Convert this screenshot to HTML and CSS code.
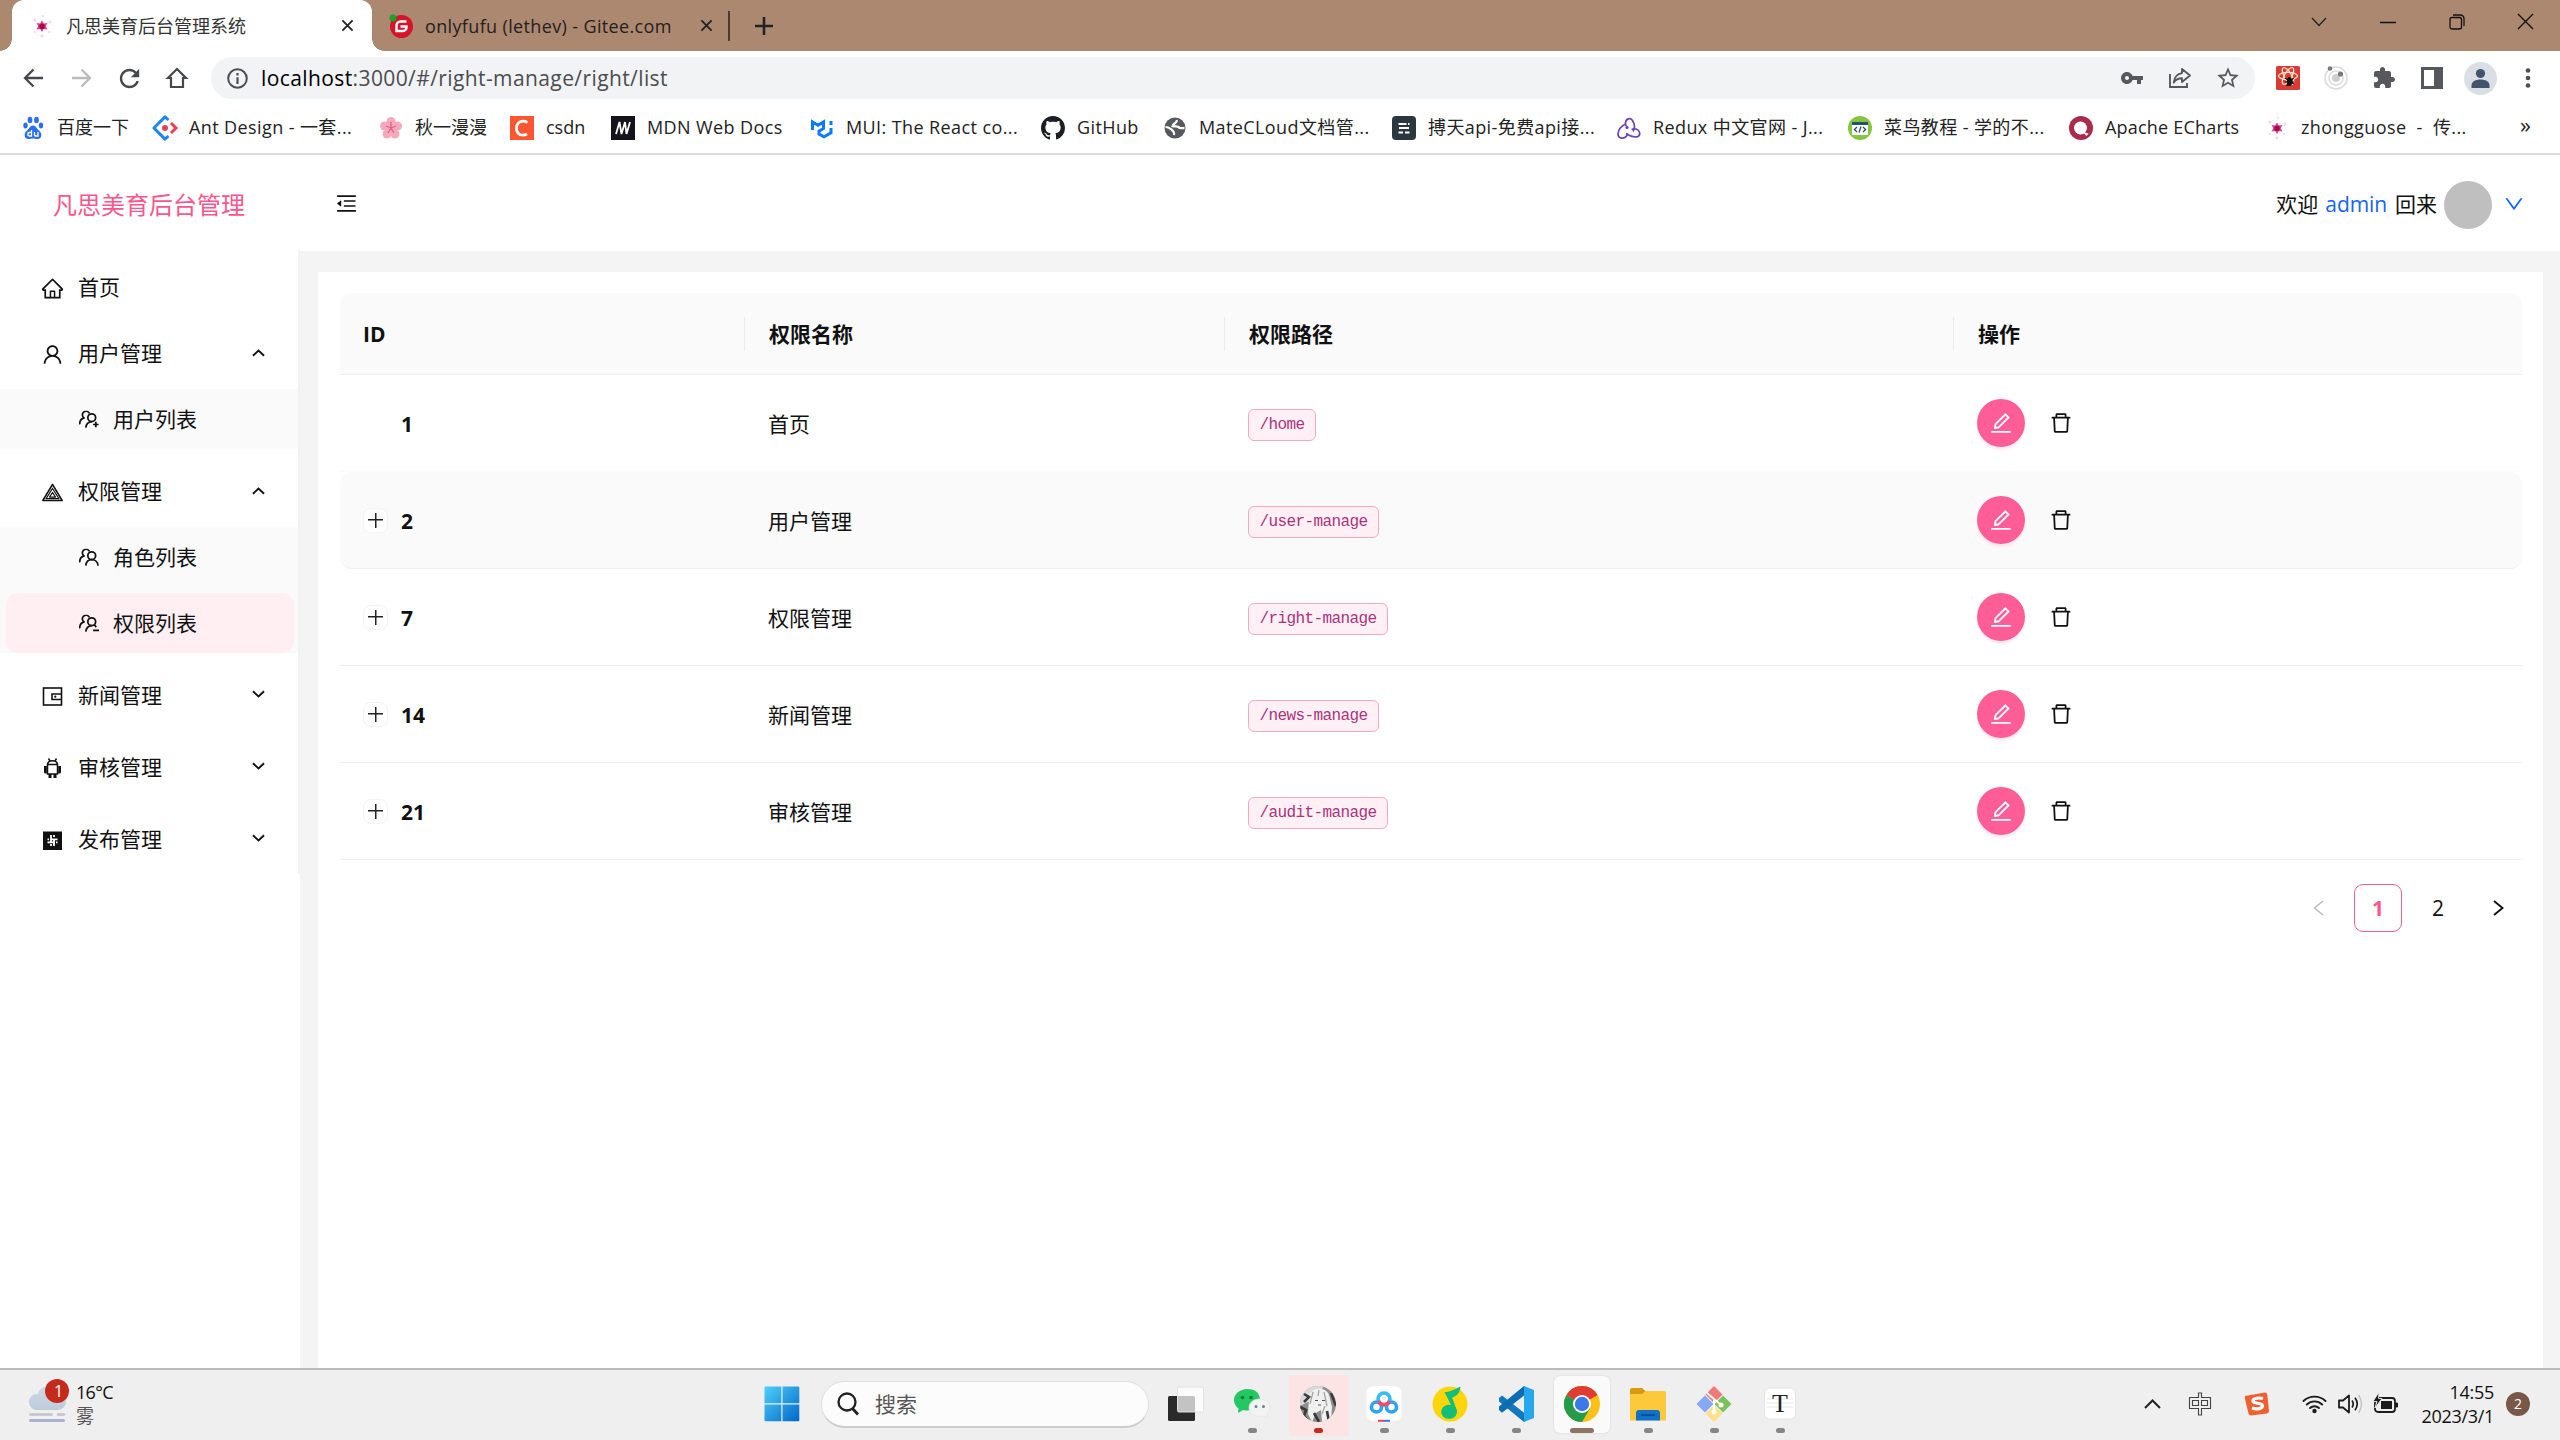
FILE: index.html
```html
<!DOCTYPE html>
<html lang="zh-CN">
<head>
<meta charset="utf-8">
<title>凡思美育后台管理系统</title>
<link rel="stylesheet" href="styles.css">
</head>
<body>
<svg class="defs" width="0" height="0">
  <defs>
    <symbol id="i-edit" viewBox="64 64 896 896"><path d="M257.7 752c2 0 4-.2 6-.5L431.9 722c2-.4 3.9-1.3 5.3-2.8l423.9-423.9a9.96 9.96 0 000-14.1L694.9 114.9c-1.9-1.9-4.4-2.9-7.1-2.9s-5.2 1-7.1 2.9L256.8 538.8c-1.5 1.5-2.4 3.3-2.8 5.3l-29.5 168.2a33.5 33.5 0 009.4 29.8c6.6 6.4 14.9 9.9 23.8 9.9zm67.4-174.4L687.8 215l73.3 73.3-362.7 362.6-88.9 15.7 15.6-89zM880 836H144c-17.7 0-32 14.3-32 32v36c0 4.4 3.6 8 8 8h784c4.4 0 8-3.6 8-8v-36c0-17.7-14.3-32-32-32z"/></symbol>
    <symbol id="i-delete" viewBox="64 64 896 896"><path d="M360 184h-8c4.4 0 8-3.6 8-8v8h304v-8c0 4.4 3.6 8 8 8h-8v72h72v-80c0-35.3-28.7-64-64-64H352c-35.3 0-64 28.7-64 64v80h72v-72zm504 72H160c-17.7 0-32 14.3-32 32v32c0 4.4 3.6 8 8 8h60.4l24.7 523c1.6 34.1 29.8 61 63.9 61h454c34.2 0 62.3-26.8 63.9-61l24.7-523H888c4.4 0 8-3.6 8-8v-32c0-17.7-14.3-32-32-32zM731.3 840H292.7l-24.2-512h487l-24.2 512z"/></symbol>
    <symbol id="i-chev" viewBox="0 0 14 8"><path d="M1 1l6 5.6L13 1" fill="none" stroke="currentColor" stroke-width="2"/></symbol>
    <symbol id="i-close" viewBox="0 0 14 14"><path d="M1.5 1.5l11 11M12.500 1.500l-11 11" fill="none" stroke="currentColor" stroke-width="2"/></symbol>
    <symbol id="i-spark" viewBox="0 0 24 24"><g fill="#f8d3e2"><circle cx="5" cy="6" r="1.500"/><circle cx="13" cy="2" r="1"/><circle cx="20" cy="8" r="1.500"/><circle cx="19" cy="18" r="1"/><circle cx="12" cy="22" r="1.500"/><circle cx="5" cy="18" r="1"/></g><path d="M12 6.500l1.800 3 3.700-.5-1.800 3.200 1.800 3.300-3.700-.5L12 18l-1.800-3-3.700.5 1.800-3.300L6.500 9l3.700.5z" fill="#e0408a"/><circle cx="12" cy="12.300" r="2.800" fill="#b00050"/></symbol>
    <symbol id="i-people" viewBox="0 0 22 20"><g fill="none" stroke="currentColor" stroke-width="1.900" stroke-linecap="round"><circle cx="14" cy="8" r="4.300"/><path d="M11 2.600A4 4 0 1 0 5.600 8.300M.8 14.500c.2-3.400 2-5.500 4.800-6.200"/></g></symbol>
  </defs>
</svg>

<header class="browser">
  <div class="tabstrip">
    <div class="tab tab-active">
      <svg class="fav"><use href="#i-spark"/></svg>
      <span class="tab-title">凡思美育后台管理系统</span>
      <svg class="tab-x"><use href="#i-close"/></svg>
    </div>
    <div class="tab tab-idle">
      <svg class="fav" viewBox="0 0 24 24"><circle cx="12.500" cy="12.500" r="11.500" fill="#d4142a"/><circle cx="4" cy="4" r="3.500" fill="#1ea025"/><path d="M17.500 7.500h-6a4 4 0 0 0-4 4v5.500h6.500a3.500 3.500 0 0 0 3.500-3.500v-1h-6" fill="none" stroke="#fff" stroke-width="2.400"/></svg>
      <span class="tab-title idle-title">onlyfufu (lethev) - Gitee.com</span>
      <svg class="tab-x"><use href="#i-close"/></svg>
    </div>
    <i class="tab-sep"></i>
    <svg class="tab-new" viewBox="0 0 18 18"><path d="M9 0v18M0 9h18" stroke="#222" stroke-width="2.600"/></svg>
    <div class="wincontrols">
      <svg width="16" height="10" viewBox="0 0 16 10"><path d="M1 1l7 7.500L15 1" fill="none" stroke="#222" stroke-width="1.300"/></svg>
      <svg width="16" height="10" viewBox="0 0 16 10"><path d="M0 5.500h16" stroke="#111" stroke-width="1.500"/></svg>
      <svg width="16" height="16" viewBox="0 0 16 16"><g fill="none" stroke="#111" stroke-width="1.300"><rect x="1" y="3.500" width="11.500" height="11.500" rx="2"/><path d="M4 1h7.500A3.500 3.500 0 0 1 15 4.500V12"/></g></svg>
      <svg width="17" height="17" viewBox="0 0 17 17"><path d="M1 1l15 15M16 1L1 16" stroke="#111" stroke-width="1.400"/></svg>
    </div>
  </div>

  <div class="toolbar">
    <span class="slot"><svg width="21" height="20" viewBox="0 0 21 20"><path d="M20 10H2M10.500 1.500L2 10l8.500 8.500" fill="none" stroke="#45494d" stroke-width="2.300"/></svg></span>
    <span class="slot"><svg width="21" height="20" viewBox="0 0 21 20"><path d="M1 10h18M10.500 1.500L19 10l-8.500 8.500" fill="none" stroke="#b9bbbd" stroke-width="2.300"/></svg></span>
    <span class="slot"><svg width="29" height="29" viewBox="0 0 24 24"><path fill="#45494d" d="M17.650 6.350C16.200 4.900 14.210 4 12 4c-4.420 0-7.990 3.580-7.990 8s3.570 8 7.990 8c3.730 0 6.840-2.550 7.730-6h-2.080c-.82 2.330-3.040 4-5.650 4-3.310 0-6-2.690-6-6s2.690-6 6-6c1.660 0 3.140.69 4.220 1.780L13 11h7V4l-2.350 2.350z"/></svg></span>
    <span class="slot"><svg width="22" height="22" viewBox="0 0 22 22"><path d="M11 2L2 11h3v9h12v-9h3z" fill="none" stroke="#45494d" stroke-width="2.200"/></svg></span>
    <div class="omnibox">
      <svg class="info" width="21" height="21" viewBox="0 0 21 21"><circle cx="10.500" cy="10.500" r="9.300" fill="none" stroke="#4b4f54" stroke-width="2"/><path d="M10.500 9.300V16M10.500 5v2.400" stroke="#4b4f54" stroke-width="2.200"/></svg>
      <span class="url"><b>localhost</b>:3000/#/right-manage/right/list</span>
      <span class="slot"><svg width="24" height="24" viewBox="0 0 24 24"><path fill="#55595e" d="M12.650 10C11.830 7.670 9.610 6 7 6c-3.310 0-6 2.690-6 6s2.690 6 6 6c2.610 0 4.830-1.670 5.650-4H17v4h4v-4h2v-4H12.650zM7 14c-1.100 0-2-.9-2-2s.9-2 2-2 2 .9 2 2-.9 2-2 2z"/></svg></span>
      <span class="slot"><svg width="24" height="24" viewBox="0 0 24 24"><g fill="none" stroke="#55595e" stroke-width="1.900"><path d="M2 8v13h17v-4"/><path d="M14 3l8 6.500-8 6.500v-3.800c-4 0-6.500 1.300-8.300 4.300.6-5 3.300-8.700 8.300-9.400z" stroke-linejoin="round"/></g></svg></span>
      <span class="slot"><svg width="26" height="26" viewBox="0 0 24 24"><path fill="#55595e" d="M22 9.240l-7.190-.62L12 2 9.190 8.630 2 9.240l5.460 4.730L5.820 21 12 17.270 18.180 21l-1.630-7.030L22 9.240zM12 15.400l-3.760 2.270 1-4.280-3.320-2.880 4.380-.38L12 6.100l1.710 4.040 4.380.38-3.320 2.880 1 4.280L12 15.400z"/></svg></span>
    </div>
    <span class="slot"><svg width="24" height="24" viewBox="0 0 24 24"><rect width="24" height="24" rx="1.500" fill="#da3a34"/><g fill="none" stroke="#ffe3c8" stroke-width="1.300"><ellipse cx="12" cy="10" rx="9.500" ry="3.600"/><ellipse cx="12" cy="10" rx="9.500" ry="3.600" transform="rotate(60 12 10)"/><ellipse cx="12" cy="10" rx="9.500" ry="3.600" transform="rotate(120 12 10)"/></g><ellipse cx="13.500" cy="15.500" rx="2.700" ry="4.500" fill="#111"/><path d="M9 12l9 6M17.500 12l-7 8M9 16h9" stroke="#111" stroke-width="1.200"/></svg></span>
    <span class="slot"><svg width="24" height="24" viewBox="0 0 24 24"><g fill="none" stroke="#dcdcdc" stroke-width="1.600"><circle cx="12" cy="12" r="11"/><circle cx="12" cy="12" r="7"/></g><circle cx="12" cy="12" r="4" fill="#cfcfcf"/><circle cx="6" cy="2.500" r="2.300" fill="#77797b"/><circle cx="16.500" cy="8" r="2.600" fill="#77797b"/></svg></span>
    <span class="slot"><svg width="24" height="24" viewBox="0 0 24 24"><path fill="#55595e" d="M20.500 11H19V7c0-1.100-.9-2-2-2h-4V3.500C13 2.120 11.880 1 10.500 1S8 2.120 8 3.500V5H4c-1.100 0-1.990.9-1.990 2v3.800H3.500c1.490 0 2.700 1.210 2.700 2.700s-1.210 2.700-2.700 2.700H2V20c0 1.100.9 2 2 2h3.800v-1.500c0-1.490 1.210-2.700 2.700-2.700 1.490 0 2.700 1.210 2.700 2.700V22H17c1.100 0 2-.9 2-2v-4h1.500c1.380 0 2.500-1.120 2.500-2.500S21.880 11 20.500 11z"/></svg></span>
    <span class="slot"><svg width="22" height="22" viewBox="0 0 22 22"><path fill="#55595e" fill-rule="evenodd" d="M0 0h22v22H0zM3 3v16h10V3z"/></svg></span>
    <span class="slot"><svg width="33" height="33" viewBox="0 0 33 33"><circle cx="16.500" cy="16.500" r="16.500" fill="#dadee5"/><circle cx="16.500" cy="11.500" r="4.600" fill="#43546c"/><path d="M7.500 26v-2.500c0-4 4-6 9-6s9 2 9 6V26z" fill="#43546c"/></svg></span>
    <span class="slot"><svg width="6" height="20" viewBox="0 0 6 20"><g fill="#4b4f54"><circle cx="3" cy="2.500" r="2.300"/><circle cx="3" cy="10" r="2.300"/><circle cx="3" cy="17.500" r="2.300"/></g></svg></span>
  </div>

  <nav class="bookmarks">
    <a class="bm"><svg viewBox="0 0 24 24"><g fill="#2a6ff0"><ellipse cx="9" cy="4" rx="2.400" ry="3.300"/><ellipse cx="15.500" cy="4" rx="2.400" ry="3.300"/><ellipse cx="4.500" cy="9.500" rx="2.200" ry="3"/><ellipse cx="20" cy="9.500" rx="2.200" ry="3"/><path d="M12 9.500c3 0 4 3.500 6.500 5.500s3 8-2 8c-2 0-3-.6-4.500-.6s-2.500.6-4.500.6c-5 0-4.500-6-2-8s3.500-5.500 6.500-5.500z"/></g><path d="M10.500 14v6h-2a1.600 1.600 0 0 1 0-3.500h2M13.500 16v2.800q0 1.200 1.200 1.200H17v-4" fill="none" stroke="#fff" stroke-width="1.300"/></svg><span>百度一下</span></a>
    <a class="bm"><svg viewBox="0 0 24 24"><path d="M15.500 4L12 .9.9 12 12 23.100l3.500-3.100" fill="none" stroke="#1d86f5" stroke-width="3" stroke-linejoin="round"/><path d="M18 7l5 5-5 5" fill="none" stroke="#ee3f52" stroke-width="3"/><circle cx="12" cy="12" r="3" fill="#ee3f52"/></svg><span class="latin">Ant Design - 一套...</span></a>
    <a class="bm"><svg viewBox="0 0 24 24"><g fill="#f6a9bd"><circle cx="12" cy="5.500" r="4.500"/><circle cx="18.500" cy="10" r="4.500"/><circle cx="16" cy="18" r="4.500"/><circle cx="8" cy="18" r="4.500"/><circle cx="5.500" cy="10" r="4.500"/><circle cx="12" cy="12" r="4"/></g><path d="M12 12V6M12 12l5-2M12 12l3 5M12 12l-3 5M12 12l-5-2" stroke="#de6480" stroke-width="1.300"/></svg><span>秋一漫漫</span></a>
    <a class="bm"><svg viewBox="0 0 24 24"><rect width="24" height="24" fill="#fc5531"/><path d="M17.500 6.500C12 3.500 6.500 6 6.500 12.300S12 20.500 17 18" fill="none" stroke="#fff" stroke-width="2.800"/></svg><span>csdn</span></a>
    <a class="bm"><svg viewBox="0 0 24 24"><rect width="24" height="24" fill="#15141a"/><path d="M5 18l3.500-12 2 12L14 6l1.500 12L19 6" fill="none" stroke="#fff" stroke-width="1.800"/></svg><span class="latin">MDN Web Docs</span></a>
    <a class="bm"><svg viewBox="0 0 24 24"><path d="M2.500 14V6l5.500 3.300L13.500 6v6.500L9 15.200V18l5 2.800 7-4V12M21 5v4" fill="none" stroke="#0a7aff" stroke-width="3"/></svg><span class="latin">MUI: The React co...</span></a>
    <a class="bm"><svg viewBox="0 0 16 16"><path fill="#1b1f23" d="M8 0C3.580 0 0 3.580 0 8c0 3.540 2.290 6.530 5.470 7.590.4.070.55-.17.55-.38 0-.19-.01-.82-.01-1.490-2.010.37-2.530-.49-2.690-.94-.09-.23-.48-.94-.82-1.130-.28-.15-.68-.52-.01-.53.63-.01 1.080.58 1.230.82.72 1.210 1.870.87 2.330.66.070-.52.28-.87.51-1.070-1.780-.2-3.640-.89-3.640-3.950 0-.87.31-1.590.82-2.150-.08-.2-.36-1.020.08-2.120 0 0 .67-.21 2.200.82.64-.18 1.320-.27 2-.27s1.360.09 2 .27c1.530-1.040 2.200-.82 2.200-.82.44 1.100.16 1.920.08 2.120.51.56.82 1.270.82 2.150 0 3.070-1.870 3.750-3.650 3.950.29.25.54.73.54 1.480 0 1.070-.01 1.930-.01 2.200 0 .21.15.46.55.38A8.010 8.010 0 0016 8c0-4.420-3.580-8-8-8z"/></svg><span class="latin">GitHub</span></a>
    <a class="bm"><svg viewBox="0 0 24 24"><circle cx="12" cy="12" r="10.500" fill="#56595d"/><path d="M13.500 4c1.500 3-3.500 3-4 6.200 3 .5 6-.5 7 1.800 2 .5 4 0 5 0M2.500 11c3 0 4 1 6 2.500s3 2.500 2.500 5.500" fill="none" stroke="#fff" stroke-width="2.200"/></svg><span class="latin">MateCLoud文档管...</span></a>
    <a class="bm"><svg viewBox="0 0 24 24"><rect width="24" height="24" rx="4" fill="#2c383f"/><path d="M6.500 8h8M16 8h1.500M7 12h10M6.500 16.500h4.500M13 16.500h4.500" stroke="#fff" stroke-width="2"/></svg><span class="latin">搏天api-免费api接...</span></a>
    <a class="bm"><svg viewBox="0 0 24 24"><g fill="none" stroke="#6c42b4" stroke-width="1.700"><path d="M16 15.500c2-3 2-7-.5-11-2-3-6.500-2-7 2-.3 2 .5 3.500 1.500 4.500"/><path d="M8.500 8c-4 2-7 6-7.500 9.500-.3 4 4 6 7.500 3.500 1.500-1 2-2.500 2-3.500"/><path d="M9 17.500c4 2.500 8 4.500 12 3 3-2 1.800-6.500-2-7.500-2-.5-3.500 0-4.500.5"/></g><circle cx="10" cy="11.500" r="1.600" fill="#6c42b4"/></svg><span class="latin">Redux 中文官网 - J...</span></a>
    <a class="bm"><svg viewBox="0 0 24 24"><circle cx="12" cy="12" r="12" fill="#87c540"/><rect x="4" y="6" width="16" height="13" rx="1" fill="#fff"/><path d="M4 6h16v3H4z" fill="#25506b"/><path d="M9 11l-2.500 2.500L9 16M15 11l2.500 2.500L15 16M13 10.500l-2 6" fill="none" stroke="#25506b" stroke-width="1.300"/></svg><span class="latin">菜鸟教程 - 学的不...</span></a>
    <a class="bm"><svg viewBox="0 0 24 24"><circle cx="12" cy="12" r="12" fill="#a92c4e"/><circle cx="11.500" cy="12" r="6.500" fill="#fff"/><path d="M13 15.500l6.500 2-2 2.500z" fill="#fff"/></svg><span class="echarts">Apache ECharts</span></a>
    <a class="bm"><svg><use href="#i-spark"/></svg><span class="latin">zhongguose&nbsp; -&nbsp; 传...</span></a>
    <span class="more">»</span>
  </nav>
</header>

<div class="app">
  <aside class="sider">
    <h1 class="logo">凡思美育后台管理</h1>
    <div class="menu">
      <div class="mi home"><svg class="mic" viewBox="64 64 896 896"><path d="M946.500 505L560.100 118.800l-25.900-25.900a31.500 31.500 0 00-44.400 0L77.500 505a63.900 63.900 0 00-18.800 46c.4 35.200 29.700 63.300 64.900 63.300h42.500V940h691.800V614.300h43.400c17.100 0 33.200-6.700 45.300-18.800a63.600 63.600 0 0018.700-45.300c0-17-6.700-33.100-18.800-45.200zM568 868H456V664h112v204zm217.900-325.700V868H632V640c0-22.100-17.900-40-40-40H432c-22.100 0-40 17.900-40 40v228H238.100V542.300h-96l370-369.700 23.100 23.100L882 542.300h-96.100z"/></svg><span>首页</span></div>
      <div class="mi"><svg class="mic" viewBox="64 64 896 896"><path d="M858.500 763.600a374 374 0 00-80.600-119.500 375.630 375.630 0 00-119.500-80.600c-.4-.2-.8-.3-1.200-.5C719.500 518 760 444.700 760 362c0-137-111-248-248-248S264 225 264 362c0 82.700 40.500 156 102.800 201.100-.4.2-.8.3-1.200.5-44.800 18.900-85 46-119.500 80.600a375.630 375.630 0 00-80.600 119.500A371.700 371.700 0 00136 901.800a8 8 0 008 8.200h60c4.400 0 7.900-3.500 8-7.800 2-77.200 33-149.500 87.800-204.300 56.700-56.700 132-87.900 212.200-87.900s155.500 31.200 212.200 87.900C779 752.700 810 825 812 902.200c.1 4.400 3.600 7.800 8 7.800h60a8 8 0 008-8.200c-1-47.800-10.900-94.300-29.500-138.200zM512 534c-45.900 0-89.100-17.900-121.600-50.400S340 407.900 340 362c0-45.900 17.900-89.100 50.400-121.600S466.100 190 512 190s89.100 17.900 121.600 50.400S684 316.100 684 362c0 45.900-17.900 89.100-50.400 121.600S557.900 534 512 534z"/></svg><span>用户管理</span><svg class="arrow up"><use href="#i-chev"/></svg></div>
      <div class="sub">
        <div class="si"><svg class="sic" viewBox="0 0 22 20"><use href="#i-people"/><path d="M7.500 19c.3-3.800 2.500-6.300 6.500-6.700M18.500 12.500v6M15.500 15.500h6" fill="none" stroke="currentColor" stroke-width="1.900"/></svg><span>用户列表</span></div>
      </div>
      <div class="mi"><svg class="mic" viewBox="0 0 21 21"><g fill="none" stroke="currentColor" stroke-linejoin="round"><path d="M10.500 2.500L20.200 18.500H.8z" stroke-width="1.500"/><path d="M10.500 6.500l6.500 10.200H4z" stroke-width="1.200"/><path d="M10.500 10.500l3 4.600h-6z" stroke-width="1.200"/></g></svg><span>权限管理</span><svg class="arrow up"><use href="#i-chev"/></svg></div>
      <div class="sub">
        <div class="si"><svg class="sic" viewBox="0 0 22 20"><use href="#i-people"/><path d="M7.500 19c.3-4 2.700-6.700 6.500-6.700s6.700 2.700 7 6.700" fill="none" stroke="currentColor" stroke-width="1.900"/></svg><span>角色列表</span></div>
        <div class="si si-active"><svg class="sic" viewBox="0 0 22 20"><use href="#i-people"/><path d="M7.500 19c.3-3.800 2.500-6.300 6.500-6.700M15.500 17.500h6.500M16.500 11l2.500 3" fill="none" stroke="currentColor" stroke-width="1.900"/></svg><span>权限列表</span></div>
      </div>
      <div class="mi"><svg class="mic" viewBox="0 0 21 21"><g fill="none" stroke="currentColor" stroke-width="1.600"><rect x="1.500" y="2" width="18" height="17"/><path d="M19.500 8H10v5.500h9.500"/></g><circle cx="13.300" cy="10.700" r="1.100"/></svg><span>新闻管理</span><svg class="arrow"><use href="#i-chev"/></svg></div>
      <div class="mi"><svg class="mic" viewBox="0 0 21 21"><g fill="none" stroke="currentColor" stroke-width="1.500"><path d="M5.500 6.500v9.500h10V6.500zM5.500 6.500c.3-2.500 2.200-3.700 5-3.700s4.700 1.200 5 3.700M6.500.5L8 3M14.500.5L13 3"/></g><path d="M2 8h2.800v7.500H3.500A1.500 1.500 0 0 1 2 14zM16.200 8H19v6a1.500 1.500 0 0 1-1.500 1.500h-1.300zM6.500 16h3v4h-3zM11.500 16h3v4h-3z"/></svg><span>审核管理</span><svg class="arrow"><use href="#i-chev"/></svg></div>
      <div class="mi"><svg class="mic" viewBox="0 0 21 21"><rect x="1" y="1.500" width="19" height="18.500"/><path d="M9 5v7M12 9.500v6.500M5.500 12.300H12M9 9.300h6.500M12 5v2M9 14v2M5.500 9.300h1.500M14 12.300h1.500" stroke="#fff" stroke-width="1.800"/></svg><span>发布管理</span><svg class="arrow"><use href="#i-chev"/></svg></div>
    </div>
  </aside>

  <section class="main">
    <div class="topbar">
      <svg class="fold" viewBox="64 64 896 896"><path d="M408 442h480c4.400 0 8-3.600 8-8v-56c0-4.400-3.600-8-8-8H408c-4.400 0-8 3.600-8 8v56c0 4.400 3.600 8 8 8zm-8 204c0 4.400 3.600 8 8 8h480c4.400 0 8-3.600 8-8v-56c0-4.400-3.600-8-8-8H408c-4.400 0-8 3.600-8 8v56zm504-486H120c-4.400 0-8 3.600-8 8v56c0 4.400 3.600 8 8 8h784c4.400 0 8-3.600 8-8v-56c0-4.400-3.600-8-8-8zm0 632H120c-4.400 0-8 3.600-8 8v56c0 4.400 3.600 8 8 8h784c4.400 0 8-3.600 8-8v-56c0-4.400-3.600-8-8-8zM115.400 518.900L271.700 642c5.800 4.600 14.400.5 14.400-6.900V388.900c0-7.400-8.500-11.500-14.400-6.900L115.400 505.100a8.740 8.740 0 000 13.800z"/></svg>
      <div class="user"><span>欢迎</span><span class="name">admin</span><span>回来</span><i class="avatar"></i>
        <svg class="drop" viewBox="64 64 896 896"><path d="M884 256h-75c-5.100 0-9.900 2.500-12.900 6.600L512 654.200 227.900 262.600c-3-4.100-7.800-6.600-12.900-6.600h-75c-6.500 0-10.300 7.400-6.500 12.700l352.600 486.100c12.800 17.600 39 17.600 51.700 0l352.600-486.100c3.900-5.300.1-12.700-6.400-12.700z"/></svg></div>
    </div>
    <div class="content">
      <div class="table">
        <div class="row head"><div>ID</div><div>权限名称</div><div>权限路径</div><div>操作</div></div>
        <div class="row first"><div class="id"><i class="noplus"></i><b>1</b></div><div class="nm">首页</div><div><code>/home</code></div><div class="ops"><button class="edit"><svg><use href="#i-edit"/></svg></button><svg class="del"><use href="#i-delete"/></svg></div></div>
        <div class="row hover"><div class="id"><i class="plus"></i><b>2</b></div><div class="nm">用户管理</div><div><code>/user-manage</code></div><div class="ops"><button class="edit"><svg><use href="#i-edit"/></svg></button><svg class="del"><use href="#i-delete"/></svg></div></div>
        <div class="row"><div class="id"><i class="plus"></i><b>7</b></div><div class="nm">权限管理</div><div><code>/right-manage</code></div><div class="ops"><button class="edit"><svg><use href="#i-edit"/></svg></button><svg class="del"><use href="#i-delete"/></svg></div></div>
        <div class="row"><div class="id"><i class="plus"></i><b>14</b></div><div class="nm">新闻管理</div><div><code>/news-manage</code></div><div class="ops"><button class="edit"><svg><use href="#i-edit"/></svg></button><svg class="del"><use href="#i-delete"/></svg></div></div>
        <div class="row"><div class="id"><i class="plus"></i><b>21</b></div><div class="nm">审核管理</div><div><code>/audit-manage</code></div><div class="ops"><button class="edit"><svg><use href="#i-edit"/></svg></button><svg class="del"><use href="#i-delete"/></svg></div></div>
      </div>
      <div class="pager">
        <span class="pg off"><svg width="11" height="16" viewBox="0 0 11 16"><path d="M10 1L1.500 8l8.500 7" fill="none" stroke="currentColor" stroke-width="1.500"/></svg></span>
        <span class="pg on">1</span>
        <span class="pg">2</span>
        <span class="pg"><svg width="11" height="16" viewBox="0 0 11 16"><path d="M1 1l8.500 7L1 15" fill="none" stroke="currentColor" stroke-width="1.900"/></svg></span>
      </div>
    </div>
  </section>
</div>

<footer class="taskbar">
  <div class="weather">
    <svg width="38" height="46" viewBox="0 0 38 46"><defs><linearGradient id="cl" x2="0" y2="1"><stop stop-color="#cfd8e6"/><stop offset="1" stop-color="#bccbdb"/></linearGradient></defs><path d="M8 31a8 8 0 0 1 0-16h1a10 10 0 0 1 19-1 8.500 8.500 0 0 1 1 17z" fill="url(#cl)"/><path d="M1.500 35.500h21M29 35.500h6" stroke="#bfc4c8" stroke-width="2.600" stroke-linecap="round"/><path d="M1.500 41.500h33" stroke="#a9b2ce" stroke-width="3" stroke-linecap="round"/><circle cx="28" cy="12" r="12" fill="#c42b1c"/><text x="29.500" y="17.500" text-anchor="middle" font-size="16" fill="#fff">1</text></svg>
    <p><span>16°C</span><span>雾</span></p>
  </div>
  <div class="dock">
    <span class="app-slot"><svg width="36" height="36" viewBox="0 0 36 36"><defs><linearGradient id="wg" x2="1" y2="1"><stop stop-color="#4fd0fb"/><stop offset="1" stop-color="#0067c8"/></linearGradient></defs><path d="M.5 1.500a1 1 0 0 1 1-1h15.800v16.800H.5zM18.500.5h15.800a1 1 0 0 1 1 1v15.800H18.500zM.5 18.500h16.800v16.800H1.500a1 1 0 0 1-1-1zM18.500 18.500h16.800v15.800a1 1 0 0 1-1 1H18.500z" fill="url(#wg)"/></svg></span>
    <div class="search"><svg width="24" height="24" viewBox="0 0 24 24"><circle cx="11" cy="10" r="8.500" fill="none" stroke="#222" stroke-width="2.300"/><path d="M16.500 16.500l5.500 6" stroke="#222" stroke-width="2.800"/></svg><span>搜索</span></div>
    <span class="app-slot"><svg width="36" height="36" viewBox="0 0 36 36"><rect x="0" y="10" width="27" height="25" rx="1.500" fill="#2a2a2a"/><rect x="9.500" y="1" width="26" height="25" rx="1.500" fill="#fff" fill-opacity=".72" stroke="#e2e2e2"/></svg></span>
    <span class="app-slot run"><svg width="36" height="36" viewBox="0 0 36 36"><path d="M13 3C6 3 0 8 0 14c0 4 2 6.500 4.500 8.500L4 27l5-3c8 2 17-2 17-10S20 3 13 3z" fill="#24c863"/><g fill="#0d7a38"><circle cx="8.500" cy="11.500" r="1.800"/><circle cx="17" cy="11.500" r="1.800"/></g><path d="M25.500 13c6 0 10.500 4 10.500 9 0 3-1.500 5-3 6.500l.5 3.500-4-2C22 32 15 28 15 22s5-9 10.500-9z" fill="#f3f3f3" stroke="#e2e2e2" stroke-width=".6"/><g fill="#6f8090"><circle cx="22" cy="20.500" r="1.500"/><circle cx="29.500" cy="20.500" r="1.500"/></g></svg></span>
    <span class="app-slot run alert"><svg width="36" height="36" viewBox="0 0 36 36"><defs><clipPath id="av"><circle cx="18" cy="18" r="18"/></clipPath></defs><g clip-path="url(#av)"><path d="M0 0h36v36H0z" fill="#8d8d8d"/><path d="M0 0h24l-6 10-10 6-8 4z" fill="#d9d9d9"/><path d="M9 10C11 1 26 0 29 9l3 12-1 15H22l-1-12-5 3-4 9-4-8z" fill="#f0f0f0"/><path d="M0 21l6 3-2 6 5 6M14 27l5 9M31 7l5 13M27 25l2 11M4 8l5 3-5 5" stroke="#3a3a3a" stroke-width="2.600" fill="none"/><path d="M13 6l-3 12M19 4l-1 6M24 6l3 14M25 20l-3 8" stroke="#a5a5a5" stroke-width="1.300" fill="none"/><path d="M15 14.500h3M22 14.500h3M18 19h3" stroke="#555"/></g></svg></span>
    <span class="app-slot run"><svg width="36" height="36" viewBox="0 0 36 36"><rect x=".5" y="0" width="35" height="35" rx="7" fill="#fff"/><g fill="none" stroke-width="3.600"><circle cx="10.500" cy="21" r="5" stroke="#2da3f5"/><circle cx="25.500" cy="21" r="5" stroke="#2da3f5"/><circle cx="18" cy="13" r="6" stroke="#34bdf3"/><path d="M12.500 15a6 6 0 0 0 11 0" stroke="#f04c68"/></g><path d="M12 34.800h6" stroke="#f0405a" stroke-width="2"/><path d="M18 34.800h6" stroke="#3a78f0" stroke-width="2"/></svg></span>
    <span class="app-slot run"><svg width="36" height="36" viewBox="0 0 36 36"><circle cx="18" cy="18" r="17.500" fill="#fcd60a"/><path d="M12.500 6c5 0 9-2 16-5.500-.5 7-4 9.500-8.500 11l5 13a8 7 0 1 1-6-5.500z" fill="#10bf7a"/></svg></span>
    <span class="app-slot run"><svg width="36" height="36" viewBox="0 0 36 36"><path d="M1 12l3-2.500 23 18V36h-1L1 15.500z" fill="#1278c0"/><path d="M1 24l3 2.700 23-18V0h-1L1 20.500z" fill="#0d6db2"/><path d="M26 0l10 4v28l-10 4z" fill="#28a8ec"/></svg></span>
    <span class="app-slot run current"><svg width="36" height="36" viewBox="0 0 36 36"><circle cx="18" cy="18" r="18" fill="#fbc116"/><path d="M18 18L2.400 9A18 18 0 0 1 33.600 9z" fill="#e03c31"/><path d="M18 18L2.400 9A18 18 0 0 0 18 36l8-13.500z" fill="#249b4b"/><circle cx="18" cy="18" r="9" fill="#fff"/><circle cx="18" cy="18" r="7.200" fill="#3b78e8"/></svg></span>
    <span class="app-slot run"><svg width="36" height="36" viewBox="0 0 36 36"><path d="M0 4a2 2 0 0 1 2-2h10l4 3.500L12 9H0z" fill="#d99a10"/><path d="M0 8h12l3.500-3H34a2 2 0 0 1 2 2v27.500H0z" fill="#fdc93a"/><path d="M6 34.500V27a3 3 0 0 1 3-3h18a3 3 0 0 1 3 3v7.500z" fill="#0f72c8"/><path d="M11 29h14" stroke="#0a4d92" stroke-width="1.800"/></svg></span>
    <span class="app-slot run"><svg width="36" height="36" viewBox="0 0 36 36"><path d="M18 0l8.500 8.500L18 17 9.500 8.500z" fill="#f07a78"/><path d="M9 9.500l8.500 8.500L9 26.500.5 18z" fill="#84a9f8"/><path d="M27 9.500l8.500 8.500-8.500 8.500-8.500-8.500z" fill="#7ac25c"/><path d="M18 19l8.500 8.500L18 36l-8.500-8.500z" fill="#fde089"/><path d="M11 7l14 12M18 14v12" stroke="#fff" stroke-width="2"/><circle cx="18" cy="26" r="2.500" fill="#fff"/><circle cx="25" cy="19" r="2.500" fill="#fff"/></svg></span>
    <span class="app-slot run"><svg width="36" height="36" viewBox="0 0 36 36"><rect x="2.500" y="2" width="31" height="31" rx="5" fill="#fff" stroke="#e3e3e3"/><path d="M5 13h26M5 17h26M5 21h26" stroke="#e6e6e6"/><text x="18" y="26" text-anchor="middle" class="serif" font-size="26" fill="#222">T</text></svg></span>
  </div>
  <div class="tray">
    <span class="t48"><svg width="17" height="10" viewBox="0 0 17 10"><path d="M1 9l7.500-7.500L16 9" fill="none" stroke="#222" stroke-width="2"/></svg></span>
    <span class="t48"><svg width="24" height="24" viewBox="0 0 24 24"><path d="M10.500 1h3v4.500H22.500v11h-9V23h-3v-6.500h-9v-11h9zM4.500 8.500v5h6v-5zM13.500 8.500v5h6v-5z" fill="none" stroke="#444" stroke-width="1.100"/></svg></span>
    <span class="t66"><svg width="26" height="24" viewBox="0 0 26 24"><path d="M1 4l20-3.500q2 0 2.300 2L25 19q0 2-2 2.500L7 23.500q-2 0-2.500-2L.8 6z" fill="#ef6030"/><path d="M19 6.500c-4-1-10-.5-10 2.500 0 3.500 9 1 9.500 4.500.3 3.500-6 4-10.500 2.500" fill="none" stroke="#fff" stroke-width="3.200"/></svg></span>
    <span class="t36 wifi"><svg width="25" height="20" viewBox="0 0 25 20"><g fill="none" stroke="#1c1c1c" stroke-width="1.900" stroke-linecap="round"><path d="M1.500 7a16 16 0 0 1 22 0M4.800 10.500a11 11 0 0 1 15.400 0M8 14a6.500 6.500 0 0 1 9 0"/></g><circle cx="12.500" cy="17" r="2.200" fill="#1c1c1c"/></svg></span>
    <span class="t36"><svg width="25" height="20" viewBox="0 0 25 20"><path d="M1 6.500h4L11 1.500v17L5 13.500H1z" fill="none" stroke="#1c1c1c" stroke-width="1.800" stroke-linejoin="round"/><path d="M14 6.500q2.500 3.500 0 7M17 3.800q4.500 6.200 0 12.400" fill="none" stroke="#1c1c1c" stroke-width="1.700"/><path d="M20.500 1q6 9 0 18" fill="none" stroke="#c4c4c4" stroke-width="1.500"/></svg></span>
    <span class="t36"><svg width="26" height="20" viewBox="0 0 26 20"><rect x="2" y="4" width="20" height="14" rx="3" fill="none" stroke="#1c1c1c" stroke-width="1.800"/><rect x="8" y="7" width="11" height="8" fill="#1c1c1c"/><path d="M22.500 9h2v4h-2z" fill="#1c1c1c" stroke="#1c1c1c"/><path d="M6-2L0 7.500h4L2 14l7-9.500H5.500z" fill="#1c1c1c" stroke="#efefef" stroke-width=".9"/></svg></span>
    <p class="clock"><span>14:55</span><span>2023/3/1</span></p>
    <i class="notif">2</i>
  </div>
</footer>
</body>
</html>
```
FILE: styles.css
```css
* { box-sizing: border-box; }
body {
  margin: 0;
  width: 2560px;
  height: 1440px;
  overflow: hidden;
  display: flex;
  flex-direction: column;
  background: #fff;
  color: #111;
  font: 21px/30px "Open Sans", "Noto Sans CJK SC", sans-serif;
}
svg { display: block; flex: none; fill: currentColor; overflow: visible; }
p, h1 { margin: 0; }
i { font-style: normal; }
.defs { position: absolute; }
.serif { font-family: "Liberation Serif", serif; }

/* browser chrome */
.browser { height: 155px; flex: none; border-bottom: 2px solid #dadada; }
.tabstrip { height: 51px; display: flex; align-items: center; background: #ac8871; padding-left: 12px; font-size: 18px; }
.tab { display: flex; align-items: center; height: 51px; }
.tab-active { width: 360px; background: #fff; border-radius: 12px 12px 0 0; padding: 0 18px; position: relative; }
.tab-active::before, .tab-active::after { content: ""; position: absolute; bottom: 0; width: 12px; height: 12px; }
.tab-active::before { left: -12px; background: radial-gradient(circle at 0 0, transparent 11.500px, #fff 12px); }
.tab-active::after { right: -12px; background: radial-gradient(circle at 100% 0, transparent 11.500px, #fff 12px); }
.tab-idle { width: 356px; padding: 0 15px 0 17px; }
.fav { width: 24px; height: 24px; margin-right: 12px; }
.tab-title { flex: 1; white-space: nowrap; color: #333; }
.idle-title { color: #24201d; letter-spacing: .36px; }
.tab-x { width: 13px; height: 13px; color: #222; }
.tab-sep { width: 1.500px; height: 30px; background: #4c3a30; }
.tab-new { width: 18px; height: 18px; margin-left: 25px; }
.wincontrols { margin-left: auto; width: 276px; height: 43px; align-self: flex-start; display: grid; grid-template-columns: repeat(4, 69px); justify-items: center; align-items: center; }

.toolbar { height: 53px; display: flex; align-items: center; padding: 1px 8px 0 9px; }
.slot { width: 48px; flex: none; display: flex; justify-content: center; }
.omnibox { flex: 1; height: 42px; margin: 0 9px 0 10px; padding: 0 3px 0 16px; border-radius: 21px; background: #f1f3f4; display: flex; align-items: center; }
.url { flex: 1; margin-left: 13px; color: #4a4d51; letter-spacing: .4px; }
.url b { font-weight: 400; color: #000; }

.bookmarks { height: 47px; display: flex; align-items: center; padding-left: 21px; font-size: 18px; color: #222; }
.bm { display: flex; align-items: center; flex: none; width: 132px; white-space: nowrap; }
.bm svg { width: 24px; height: 24px; margin-right: 12px; }
.bm span { margin-top: -2px; }
.latin { letter-spacing: .4px; }
.echarts { letter-spacing: .2px; }
.bm:nth-child(2) { width: 226px; }
.bm:nth-child(3) { width: 131px; }
.bm:nth-child(4) { width: 101px; }
.bm:nth-child(5) { width: 199px; }
.bm:nth-child(6) { width: 231px; }
.bm:nth-child(7) { width: 122px; }
.bm:nth-child(8) { width: 229px; }
.bm:nth-child(9) { width: 225px; }
.bm:nth-child(10) { width: 231px; }
.bm:nth-child(11) { width: 221px; }
.bm:nth-child(12) { width: 196px; }
.bm:nth-child(13) { width: 255px; }
.more { font-size: 22px; line-height: 20px; padding-bottom: 7px; }

/* application */
.app { flex: 1; display: flex; min-height: 0; }
.sider { width: 300px; flex: none; background: #fff; }
.logo { height: 95px; line-height: 99px; padding-left: 53px; font-size: 24px; font-weight: 400; color: #f9568d; white-space: nowrap; }
.menu { height: 624px; border-right: 2px solid #f2f2f2; display: flex; flex-direction: column; padding-top: 8px; color: #111; }
.mi { height: 60px; margin-bottom: 12px; flex: none; display: flex; align-items: center; padding: 0 33px 0 42px; }
.home { margin-bottom: 6px; }
.mi:has(+ .sub) { margin-bottom: 5px; }
.mic { width: 21px; height: 21px; margin-right: 15px; }
.mi span { flex: 1; margin-top: -2px; }
.arrow { width: 13px; height: 8px; margin-top: -5px; }
.up { transform: scaleY(-1); margin-top: -2px; }
.sub { flex: none; background: #fafafa; margin-bottom: 13px; display: flex; flex-direction: column; gap: 6px; }
.si { height: 60px; margin: 0 4px 0 6px; padding-left: 73px; display: flex; align-items: center; border-radius: 12px; }
.sic { width: 20px; height: 19px; margin-right: 14px; }
.si-active { background: #ffeff3; }

.main { flex: 1; display: flex; flex-direction: column; min-width: 0; }
.topbar { height: 96px; flex: none; display: flex; align-items: center; padding: 3px 36px 0 36px; background: #fff; }
.fold { width: 21px; height: 21px; margin-top: -2px; }
.user { margin-left: auto; display: flex; align-items: center; }
.user span { margin-top: -2px; }
.name { color: #1663f5; padding: 0 8px 0 7px; letter-spacing: -.1px; }
.avatar { width: 48px; height: 48px; border-radius: 50%; background: #bfbfbf; margin: 0 12px 0 7px; }
.drop { width: 20px; height: 20px; color: #1663f5; margin-top: -2px; }
.content { flex: 1; background: #fff; border: solid #f4f4f4; border-width: 21px 17px 0 18px; padding: 21px 21px 0 22px; }

.row { display: grid; grid-template-columns: 404px 480px 729px 1fr; height: 97px; border-bottom: 1.500px solid #eee; align-items: center; }
.row > div { padding-left: 24px; }
.row > div:first-child { padding-left: 23px; }
.head { height: 82px; background: #fafafa; border-radius: 12px 12px 0 0; font-weight: 700; }
.head > div { height: 34px; line-height: 34px; }
.head > div + div { border-left: 1.500px solid #ebebeb; }
.first { border-color: #fafafa; }
.hover { background: #fafafa; border-radius: 12px; }
.id { display: flex; align-items: center; }
.id b, .nm { padding-top: 2px; }
.plus, .noplus { width: 25px; height: 25px; margin-right: 13px; }
.plus { border: 1.500px solid #f3f3f3; border-radius: 8px; background: linear-gradient(#222, #222) center / 15px 1.500px no-repeat, linear-gradient(#222, #222) center / 1.500px 15px no-repeat, #fff; }
code { display: inline-block; height: 32px; padding: 0 10.500px; border: 1.500px solid #f3a9c5; border-radius: 6px; background: #fff0f5; color: #a8347c; font: 16px/31px "Liberation Mono", monospace; letter-spacing: -.6px; vertical-align: middle; margin-top: 3px; }
.ops { display: flex; align-items: center; }
.edit { width: 48px; height: 48px; padding: 0; border: 0; border-radius: 50%; background: #fe5e95; color: #fff; display: grid; place-items: center; box-shadow: 0 3px 2px rgba(255, 90, 150, .12); }
.edit svg { width: 22px; height: 22px; }
.del { width: 22px; height: 22px; margin: -1px 0 0 25px; color: #111; }

.pager { display: flex; justify-content: flex-end; gap: 12px; margin-top: 24px; }
.pg { width: 48px; height: 48px; display: grid; place-items: center; border-radius: 9px; }
.on { border: 1.500px solid #f0608f; color: #f9568d; font-weight: 700; }
.off { color: #bbb; }

/* taskbar */
.taskbar { height: 72px; flex: none; border-top: 2px solid #bababa; background: #efefef; display: flex; align-items: center; font-size: 18px; line-height: 24px; }
.weather { width: 749px; padding-left: 29px; display: flex; align-items: center; }
.weather p { margin: -3px 0 0 9px; }
.weather span, .clock span { display: block; letter-spacing: -.7px; }
.weather span + span { color: #555; }
.weather svg { margin-top: -7px; }
.dock { display: flex; align-items: center; height: 70px; }
.app-slot { width: 66px; height: 70px; display: grid; place-items: center; position: relative; padding-bottom: 2px; }
.search { width: 328px; height: 47px; margin: 0 4px 2px 6px; border-radius: 24px; border: 1.500px solid #e0e0e0; border-bottom: 2px solid #ccc; background: #fcfcfc; display: flex; align-items: center; padding-left: 14px; gap: 15px; font-size: 21px; color: #555; }
.run::after { content: ""; position: absolute; left: 28.500px; bottom: 7px; width: 9px; height: 5px; border-radius: 3px; background: #868686; }
.alert { background: linear-gradient(#fde4e4, #fde4e4) 4px 5px / 60px 61px no-repeat; }
.alert::after { background: #c42b1c; }
.current { background: none; }
.current::before { content: ""; position: absolute; left: 5px; top: 6px; width: 56px; height: 57px; border-radius: 6px; background: #fafafa; box-shadow: 0 0 2px #ccc; }
.current svg { position: relative; }
.current::after { left: 21px; width: 24px; background: #8f7463; }
.tray { margin-left: auto; padding: 0 30px 2px 0; display: flex; align-items: center; }
.tray > span { display: flex; justify-content: center; }
.t48 { width: 48px; }
.t66 { width: 66px; }
.t36 { width: 36px; }
.wifi { margin-left: 6px; }
.clock { width: 90px; text-align: right; margin-top: -1px; }
.clock span { letter-spacing: -.3px; }
.notif { width: 24px; height: 24px; margin-left: 12px; border-radius: 50%; background: #7a5848; color: #fff; font-size: 14px; text-align: center; line-height: 23px; }
```
